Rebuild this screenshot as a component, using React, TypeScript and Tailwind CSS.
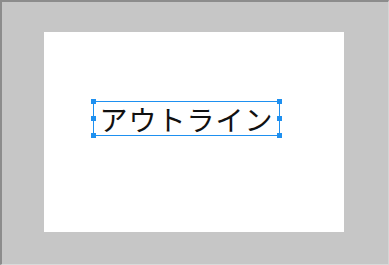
import React from "react";

function Handle({ cls }: { cls: string }) {
  return <div className={`absolute w-[5px] h-[5px] bg-[#1e90f0] ${cls}`} />;
}

export default function App() {
  return (
    <div className="w-[389px] h-[265px] bg-[#c6c6c6] border-t-2 border-l-2 border-[#8c8c8c] border-b border-r border-b-[#dadada] border-r-[#d4d4d4] overflow-hidden">
      <div className="pt-[30px] pl-[42px]">
        <div className="w-[300px] h-[200px] bg-white pt-[69px] pl-[49px]">
          <div className="relative w-[187px] h-[35px] border border-[#1e90f0] flex items-center justify-center">
            <span
              className="text-[28px] leading-none font-normal text-[#111] tracking-[1px]"
              style={{ fontFamily: '"Noto Sans CJK JP", sans-serif' }}
            >
              アウトライン
            </span>
            <Handle cls="-left-[3px] -top-[3px]" />
            <Handle cls="-right-[3px] -top-[3px]" />
            <Handle cls="-left-[3px] top-[14px]" />
            <Handle cls="-right-[3px] top-[14px]" />
            <Handle cls="-left-[3px] -bottom-[3px]" />
            <Handle cls="-right-[3px] -bottom-[3px]" />
          </div>
        </div>
      </div>
    </div>
  );
}
